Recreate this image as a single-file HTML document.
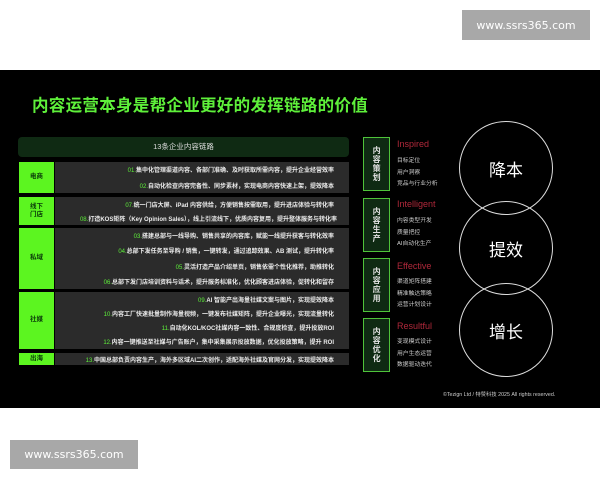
<!DOCTYPE html>
<html><head><meta charset="utf-8"><style>
*{margin:0;padding:0;box-sizing:border-box}
body{width:600px;height:480px;background:#fff;position:relative;overflow:hidden;font-family:"Liberation Sans","Noto Sans CJK SC",sans-serif}
.wm{position:absolute;background:#a8a8a8;color:#fff;font-size:11px;display:flex;align-items:center;justify-content:center;font-family:"DejaVu Sans",sans-serif}
.slide{position:absolute;left:0;top:70px;width:600px;height:338px;background:#000}
.a{position:absolute}
.title{left:32px;top:92px;color:#5ef03a;font-size:16.5px;font-weight:bold;letter-spacing:.3px}
.hdr{left:18px;top:137px;width:331px;height:20px;background:#0f2a13;border-radius:4px;color:#ddd;font-size:7.5px;text-align:center;line-height:20px}
.lab{background:#5cf520;color:#0a3a0a;font-size:6.5px;font-weight:bold;display:flex;align-items:center;justify-content:center;text-align:center;line-height:1.3;left:19px;width:35px}
.rw{background:#2b2b2b;left:55px;width:294px;color:#ececec;font-size:6px;font-weight:bold;padding-right:15px;display:flex;flex-direction:column;justify-content:space-around;align-items:flex-end;white-space:nowrap}
.rw b{color:#5ef03a;font-weight:normal}
.box{left:363px;width:27px;height:54px;border:1.5px solid #4fc33a;background:#0f2a13;color:#e0e0e0;font-size:8px;font-weight:bold;display:flex;align-items:center;justify-content:center;text-align:center;line-height:1.15;writing-mode:vertical-rl;letter-spacing:1px}
.en{left:397px;color:#b0283a;font-size:9px}
.it{left:397px;color:#ccc;font-size:5.8px;line-height:11.5px}
.c{border:1px solid #ddd;border-radius:50%;width:94px;height:94px;left:459px;display:flex;align-items:center;justify-content:center;color:#fff;font-size:17px}
</style></head><body>
<div class="wm" style="left:462px;top:10px;width:128px;height:30px">www.ssrs365.com</div>
<div class="wm" style="left:10px;top:440px;width:128px;height:29px">www.ssrs365.com</div>
<div class="slide"></div>
<div class="a title">内容运营本身是帮企业更好的发挥链路的价值</div>
<div class="a hdr">13条企业内容链路</div>

<div class="a lab" style="top:162px;height:31px">电商</div>
<div class="a rw" style="top:162px;height:31px"><div><b>01.</b>集中化管理渠道内容、各部门准确、及时获取所需内容，提升企业经营效率</div><div><b>02.</b>自动化检查内容完备性、同步素材，实现电商内容快速上架，提效降本</div></div>

<div class="a lab" style="top:197px;height:28px">线下<br>门店</div>
<div class="a rw" style="top:197px;height:28px;padding-right:12px"><div style="padding-right:3px"><b>07.</b>统一门店大屏、iPad 内容供给，方便销售按需取用，提升进店体验与转化率</div><div><b>08.</b>打造KOS矩阵（Key Opinion Sales），线上引流线下，优质内容复用，提升整体服务与转化率</div></div>

<div class="a lab" style="top:228px;height:61px">私域</div>
<div class="a rw" style="top:228px;height:61px"><div><b>03.</b>搭建总部与一线导购、销售共享的内容库，赋能一线提升获客与转化效率</div><div><b>04.</b>总部下发任务至导购 / 销售，一键转发，通过追踪效果、AB 测试，提升转化率</div><div><b>05.</b>灵活打造产品介绍单页，销售依需个性化推荐，助推转化</div><div><b>06.</b>总部下发门店培训资料与话术，提升服务标准化，优化顾客进店体验，促转化和留存</div></div>

<div class="a lab" style="top:292px;height:57px">社媒</div>
<div class="a rw" style="top:292px;height:57px"><div><b>09.</b>AI 智能产出海量社媒文案与图片，实现提效降本</div><div><b>10.</b>内容工厂快速批量制作海量视频，一键发布社媒矩阵，提升企业曝光，实现流量转化</div><div><b>11.</b>自动化KOL/KOC社媒内容一致性、合规度检查，提升投放ROI</div><div><b>12.</b>内容一键推送至社媒与广告账户，集中采集展示投放数据，优化投放策略，提升 ROI</div></div>

<div class="a lab" style="top:353px;height:12px">出海</div>
<div class="a rw" style="top:353px;height:12px"><div><b>13.</b>中国总部负责内容生产，海外多区域AI二次创作，适配海外社媒及官网分发，实现提效降本</div></div>

<div class="a box" style="top:137px">内容策划</div>
<div class="a box" style="top:198px">内容生产</div>
<div class="a box" style="top:258px">内容应用</div>
<div class="a box" style="top:318px">内容优化</div>

<div class="a en" style="top:139px">Inspired</div>
<div class="a it" style="top:156px">目标定位<br>用户洞察<br>竞品与行业分析</div>
<div class="a en" style="top:199px">Intelligent</div>
<div class="a it" style="top:216px">内容类型开发<br>质量把控<br>AI自动化生产</div>
<div class="a en" style="top:261px">Effective</div>
<div class="a it" style="top:277px">渠道矩阵搭建<br>精准触达策略<br>运营计划设计</div>
<div class="a en" style="top:321px">Resultful</div>
<div class="a it" style="top:337px">变现模式设计<br>用户生态运营<br>数据驱动迭代</div>

<div class="a c" style="top:121px">降本</div>
<div class="a c" style="top:201px">提效</div>
<div class="a c" style="top:283px">增长</div>
<div class="a" style="left:443px;top:390px;color:#ccc;font-size:5.3px">©Tezign Ltd / 特赞科技 2025 All rights reserved.</div>
</body></html>
